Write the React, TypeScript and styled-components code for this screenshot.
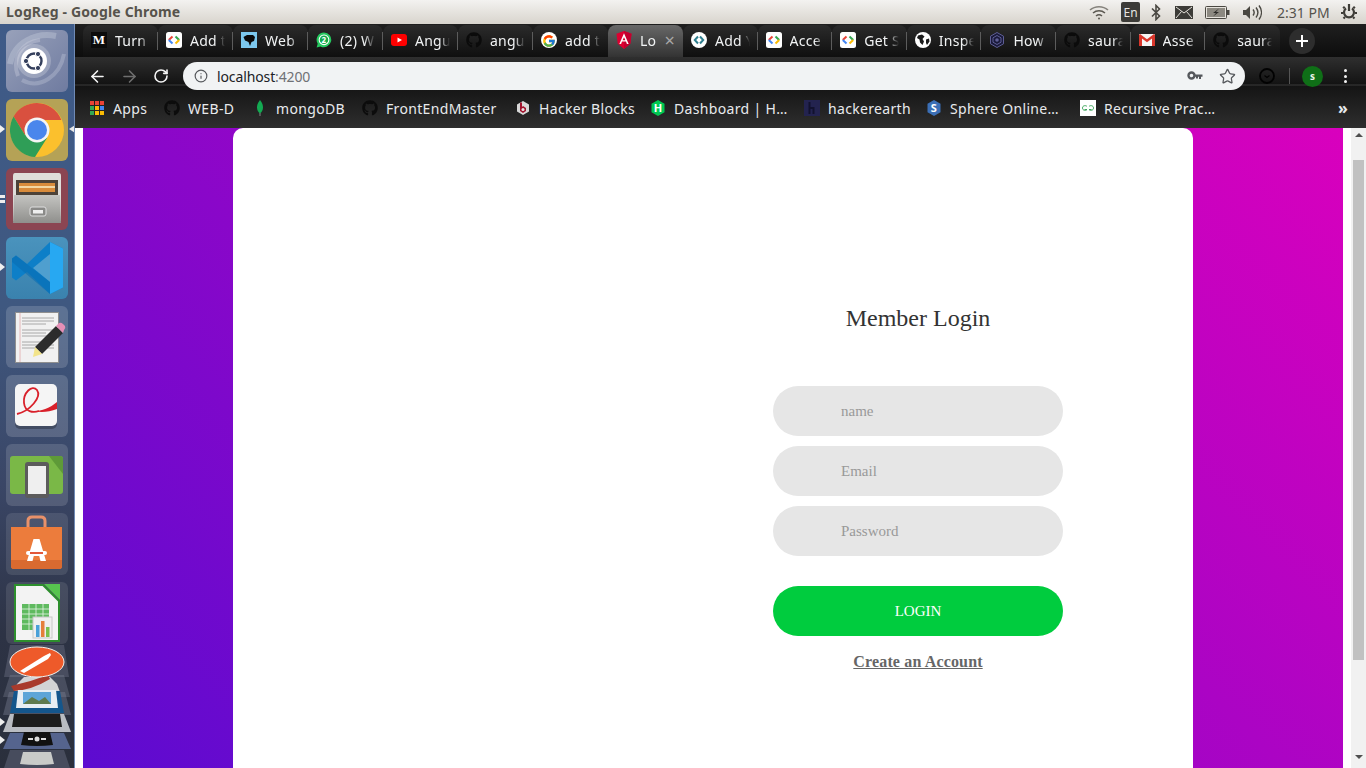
import React from "react";
import styled, { createGlobalStyle } from "styled-components";
import { ArrowLeft, ArrowRight, RotateCw, Star, Info } from "lucide-react";
import { FaGithub } from "react-icons/fa";
import { FcGoogle } from "react-icons/fc";

const Global = createGlobalStyle`
  html, body { margin: 0; padding: 0; height: 100%; overflow: hidden; background: #fff; }
  * { box-sizing: border-box; }
  input::placeholder { color: #999; opacity: 1; }
`;

const uiFont = `"Noto Sans", "Open Sans", sans-serif`;
const serif = `"Liberation Serif", "Times New Roman", serif`;

const Desktop = styled.div`
  width: 1366px;
  height: 768px;
  display: flex;
  flex-direction: column;
  overflow: hidden;
`;

const TopBar = styled.header`
  height: 24px;
  flex: none;
  display: flex;
  align-items: center;
  justify-content: space-between;
  padding: 0 7px 0 6px;
  background: linear-gradient(#f3f2f0, #d8d4cd);
  font-family: ${uiFont};
`;
const WindowTitle = styled.div`
  font-size: 14px;
  font-weight: 700;
  color: #57534c;
  letter-spacing: 0.15px;
  margin-bottom: 2px;
`;
const Tray = styled.div`
  display: flex;
  align-items: center;
  height: 24px;
`;
const TraySlot = styled.div<{ $w: number }>`
  width: ${(p) => p.$w}px;
  display: flex;
  align-items: center;
  justify-content: center;
  flex: none;
`;
const LangBadge = styled.div`
  width: 19px;
  height: 20px;
  margin-right: 3px;
  border-radius: 2px;
  background: #3c3b37;
  color: #e8e6e1;
  font-size: 12px;
  display: flex;
  align-items: center;
  justify-content: center;
`;
const Clock = styled.div`
  font-size: 14px;
  color: #55524c;
  width: 53px;
  white-space: nowrap;
  margin: 0 9px 0 8px;
`;

const Body = styled.div`
  flex: 1;
  display: flex;
  min-height: 0;
`;

const Launcher = styled.nav`
  width: 75px;
  flex: none;
  display: flex;
  flex-direction: column;
  align-items: center;
  gap: 7px;
  padding-top: 6px;
  padding-right: 1px;
  overflow: hidden;
  background: linear-gradient(#3f5b88 0, #3f5880 38%, #3a4666 62%, #2d3345 82%, #2a2f3c 100%);
  border-right: 1px solid #6f8ab5;
`;
const Tile = styled.div<{ $bg: string }>`
  position: relative;
  width: 62px;
  height: 62px;
  flex: none;
  border-radius: 6px;
  background: ${(p) => p.$bg};
  display: flex;
  align-items: center;
  justify-content: center;
`;
const PipLeft = styled.span`
  position: absolute;
  left: -6px;
  top: 26px;
  width: 0;
  height: 0;
  border-top: 4px solid transparent;
  border-bottom: 4px solid transparent;
  border-left: 5px solid #f0f0f0;
`;
const PipRight = styled.span`
  position: absolute;
  right: -7px;
  top: 26px;
  width: 0;
  height: 0;
  border-top: 4px solid transparent;
  border-bottom: 4px solid transparent;
  border-right: 6px solid #e8e8e8;
`;
const DoublePip = styled.span`
  position: absolute;
  left: -6px;
  top: 27px;
  width: 5px;
  height: 8px;
  border-top: 3px solid #eee;
  border-bottom: 3px solid #eee;
`;
const Stack = styled.svg`
  flex: none;
  margin-top: -7px;
`;

const Browser = styled.div`
  flex: 1;
  min-width: 0;
  display: flex;
  flex-direction: column;
`;
const TabStrip = styled.div`
  height: 33px;
  flex: none;
  display: flex;
  align-items: stretch;
  padding: 1px 0 0 8px;
  background: linear-gradient(#1f1f1f, #0d0d0d);
  font-family: ${uiFont};
`;
const Tab = styled.div<{ $active?: boolean; $sep?: boolean; $wide?: boolean }>`
  position: relative;
  width: ${(p) => (p.$wide ? "75px" : "74.6px")};
  flex: none;
  display: flex;
  align-items: center;
  gap: 8px;
  padding: 0 0 2px 8px;
  border-radius: 8px 8px 0 0;
  background: ${(p) =>
    p.$active ? "linear-gradient(#686868, #333333)" : "linear-gradient(#2b2b2b, #0f0f0f)"};
  color: #f1f3f4;
  font-size: 14px;
  letter-spacing: 0.25px;
  &::after {
    content: "";
    display: ${(p) => (p.$sep ? "block" : "none")};
    position: absolute;
    right: 0;
    top: 7px;
    height: 18px;
    width: 1px;
    background: #5c5c5c;
  }
`;
const TabLabel = styled.span<{ $w: number }>`
  width: ${(p) => p.$w}px;
  white-space: nowrap;
  -webkit-mask-image: linear-gradient(to right, #000 70%, transparent);
  mask-image: linear-gradient(to right, #000 70%, transparent);
`;
const TabClose = styled.span`
  position: absolute;
  right: 8px;
  top: 5px;
  font-size: 18px;
  line-height: 20px;
  color: #a8a8a8;
`;
const NewTab = styled.div`
  width: 26px;
  height: 26px;
  margin: 3px 0 0 9px;
  border-radius: 50%;
  background: #2d2d2d;
  color: #fff;
  display: flex;
  align-items: center;
  justify-content: center;
`;
const FavBox = styled.span`
  width: 16px;
  height: 16px;
  flex: none;
  display: inline-flex;
  align-items: center;
  justify-content: center;
`;
const MediumMark = styled.span`
  width: 16px;
  height: 16px;
  background: #0b0b0b;
  color: #fff;
  font: 700 13px/16px ${serif};
  text-align: center;
`;

const Toolbar = styled.div`
  height: 33px;
  flex: none;
  display: flex;
  align-items: flex-start;
  padding: 5px 0 0 6px;
  background: linear-gradient(#2f2f2f 0, #131313 27px, #3a3a3a 28px, #141414 29px, #161616 100%);
`;
const NavButton = styled.div<{ $dim?: boolean }>`
  width: 32px;
  height: 28px;
  display: flex;
  align-items: center;
  justify-content: center;
  color: ${(p) => (p.$dim ? "#6f6f6f" : "#f5f5f5")};
`;
const Omnibox = styled.div`
  width: 1062px;
  height: 28px;
  margin-left: 6px;
  flex: none;
  display: flex;
  align-items: center;
  padding: 0 2px 0 11px;
  border-radius: 14px;
  background: #f1f3f4;
  font: 14px ${uiFont};
  color: #202124;
`;
const UrlHost = styled.span`
  margin-left: 9px;
  flex: 1;
  letter-spacing: -0.12px;
`;
const UrlPort = styled.span`
  color: #6f7175;
`;
const OmniIcon = styled.span`
  width: 32px;
  display: flex;
  align-items: center;
  justify-content: center;
  color: #55585c;
`;
const ExtSlot = styled.div`
  width: 44px;
  height: 28px;
  display: flex;
  align-items: center;
  justify-content: center;
`;
const ToolDivider = styled.div`
  width: 1px;
  height: 16px;
  margin-top: 6px;
  background: #555;
`;
const ToolCell = styled.div`
  height: 28px;
  display: flex;
  align-items: center;
  justify-content: center;
  width: 47px;
`;
const Avatar = styled.div`
  width: 21px;
  height: 21px;
  border-radius: 50%;
  background: #0f6f17;
  color: #e8f5e9;
  font: 700 10px/21px ${uiFont};
  text-align: center;
  margin-right: 2px;
`;
const Dots = styled.div`
  width: 16px;
  height: 14px;
  margin-top: 7px;
  display: flex;
  flex-direction: column;
  align-items: center;
  gap: 2.5px;
  & > i {
    width: 3px;
    height: 3px;
    background: #f2f2f2;
    border-radius: 50%;
  }
`;

const Bookmarks = styled.div`
  height: 38px;
  flex: none;
  display: flex;
  align-items: center;
  padding: 0 0 2px 14px;
  background: linear-gradient(#171717, #2e2e2e);
  font: 14px ${uiFont};
  color: #e8eaed;
  letter-spacing: 0.33px;
`;
const Mark = styled.div<{ $w: number }>`
  width: ${(p) => p.$w}px;
  flex: none;
  display: flex;
  align-items: center;
  gap: 8px;
  white-space: nowrap;
`;
const MoreMarks = styled.div`
  margin-left: auto;
  width: 32px;
  padding-left: 4px;
  font-size: 16px;
  font-weight: 700;
  color: #e8eaed;
`;

const Viewport = styled.div`
  flex: 1;
  min-height: 0;
  display: flex;
  background: #fff;
`;
const Gradient = styled.main`
  width: 1260px;
  margin-left: 8px;
  flex: none;
  display: flex;
  justify-content: center;
  background: linear-gradient(45deg, rgb(92, 11, 208), rgb(217, 0, 189));
`;
const Card = styled.section`
  width: 960px;
  height: 100%;
  display: flex;
  justify-content: flex-end;
  padding-right: 130px;
  background: #fff;
  border-radius: 10px 10px 0 0;
`;
const LoginForm = styled.form`
  width: 290px;
  display: flex;
  flex-direction: column;
  align-items: center;
  padding-top: 176px;
  font-family: ${serif};
`;
const Heading = styled.h1`
  margin: 0 0 54px;
  font-size: 24px;
  line-height: 28px;
  font-weight: 400;
  color: #333;
`;
const Field = styled.input`
  width: 100%;
  height: 50px;
  margin-bottom: 10px;
  padding: 0 30px 0 68px;
  border: 0;
  outline: 0;
  border-radius: 25px;
  background: #e6e6e6;
  font: 15px ${serif};
  color: #333;
`;
const Submit = styled.button`
  width: 100%;
  height: 50px;
  margin-top: 20px;
  border: 0;
  border-radius: 25px;
  background: #00cc3e;
  color: #fff;
  font: 15px ${serif};
`;
const CreateLink = styled.a`
  margin-top: 17px;
  font-size: 16px;
  line-height: 18px;
  font-weight: 700;
  letter-spacing: 0.15px;
  color: #666;
  text-decoration: underline;
`;
const Scrollbar = styled.aside`
  width: 15px;
  margin-left: 8px;
  flex: none;
  display: flex;
  flex-direction: column;
  align-items: center;
  padding-top: 5px;
  background: #f1f1f1;
`;
const ArrowUp = styled.span`
  width: 0;
  height: 0;
  border-left: 4px solid transparent;
  border-right: 4px solid transparent;
  border-bottom: 4px solid #505050;
`;
const ArrowDown = styled.span`
  width: 0;
  height: 0;
  margin-top: 95px;
  border-left: 4px solid transparent;
  border-right: 4px solid transparent;
  border-top: 4px solid #505050;
`;
const Thumb = styled.div`
  width: 11px;
  height: 500px;
  margin-top: 23px;
  background: #c1c1c1;
`;

type FavKind = "medium" | "dev" | "web" | "wa" | "yt" | "gh" | "g" | "ng" | "circ" | "globe" | "hex" | "gmail";

const Dev = () => (
  <svg width="16" height="16" viewBox="0 0 16 16">
    <rect width="16" height="16" rx="2.5" fill="#fff" />
    <path d="M6.5 4.5 2.8 8" fill="none" stroke="#ea4335" strokeWidth="2" />
    <path d="M2.8 8l3.7 3.5" fill="none" stroke="#4285f4" strokeWidth="2" />
    <path d="M9.5 4.5 13.2 8" fill="none" stroke="#34a853" strokeWidth="2" />
    <path d="M13.2 8 9.5 11.5" fill="none" stroke="#fbbc05" strokeWidth="2" />
  </svg>
);

const AngularLogo = () => (
  <svg width="16" height="18" viewBox="0 0 16 18">
    <path d="M8 0 .5 2.7l1.2 10L8 18l6.300-5.300 1.200-10z" fill="#dd0031" />
    <path d="M8 0v18l6.300-5.300 1.200-10z" fill="#c3002f" />
    <path d="M8 2.200 3.300 13h1.800l.9-2.400h4l.9 2.400h1.800zM8 6.300l1.400 3H6.600z" fill="#fff" />
  </svg>
);

const Fav = ({ kind }: { kind: FavKind }) => {
  switch (kind) {
    case "medium":
      return <MediumMark>M</MediumMark>;
    case "dev":
      return <Dev />;
    case "web":
      return (
        <svg width="16" height="16" viewBox="0 0 16 16">
          <rect width="16" height="16" fill="#7cc8ee" />
          <path d="M2.500 5 6 3h6l2 2-1 4-2.500 1L9 14 7.500 10 4 8.500z" fill="#0a0a0a" />
        </svg>
      );
    case "wa":
      return (
        <svg width="18" height="18" viewBox="0 0 18 18">
          <path d="M9 .5a8.300 8.300 0 0 0-7.100 12.600L.7 17.400l4.400-1.200A8.300 8.300 0 1 0 9 .5z" fill="#25c95f" />
          <circle cx="9" cy="8.800" r="6" fill="#fff" />
          <circle cx="9" cy="8.800" r="4.800" fill="#12a84b" />
          <text x="9" y="12" textAnchor="middle" fontSize="9" fontWeight="700" fontFamily="Noto Sans" fill="#fff">2</text>
        </svg>
      );
    case "yt":
      return (
        <svg width="16" height="16" viewBox="0 0 16 16">
          <rect y="2" width="16" height="12" rx="3" fill="#f00" />
          <path d="M6.500 5.500 11 8l-4.500 2.500z" fill="#fff" />
        </svg>
      );
    case "gh":
      return <FaGithub size={16} color="#0b0b0b" />;
    case "g":
      return (
        <svg width="16" height="16" viewBox="0 0 16 16">
          <circle cx="8" cy="8" r="8" fill="#fff" />
          <foreignObject x="1" y="1" width="14" height="14">
            <FcGoogle size={14} />
          </foreignObject>
        </svg>
      );
    case "ng":
      return <AngularLogo />;
    case "circ":
      return (
        <svg width="16" height="16" viewBox="0 0 16 16">
          <circle cx="8" cy="8" r="8" fill="#fff" />
          <path d="M7 4.500 3.800 8 7 11.500M9 4.500 12.200 8 9 11.500" fill="none" stroke="#2f7f8f" strokeWidth="2" />
        </svg>
      );
    case "globe":
      return (
        <svg width="16" height="16" viewBox="0 0 16 16">
          <circle cx="8" cy="8" r="8" fill="#fff" />
          <path d="M3 3.500 7 2.500 9.500 4.500 7.500 7 9 9.500 7.500 13 5 10.500 4.500 7.500 2 6zM11 7.500l3-1 .5 3-2.500 3.500-1-2z" fill="#1b1b1b" />
        </svg>
      );
    case "hex":
      return (
        <svg width="16" height="16" viewBox="0 0 16 16">
          <path d="M8 .5 14.500 4.200v7.600L8 15.500 1.500 11.800V4.200z" fill="#1a1a3a" stroke="#5f5f96" />
          <path d="M8 3.500 12 5.800v4.400L8 12.500 4 10.200V5.800z" fill="none" stroke="#5f5f96" />
          <circle cx="8" cy="8" r="1.800" fill="#5f5f96" />
        </svg>
      );
    case "gmail":
      return (
        <svg width="16" height="16" viewBox="0 0 16 16">
          <rect y="2" width="16" height="12" rx="1" fill="#f5f5f5" />
          <path d="M0 3v11h3V6.500l5 3.700 5-3.700V14h3V3l-1-1-7 5.200L1 2z" fill="#d9362b" />
        </svg>
      );
  }
};

const tabs: { icon: FavKind; label: string; w: number; active?: boolean; sep?: boolean }[] = [
  { icon: "medium", label: "Turn", w: 35, sep: true },
  { icon: "dev", label: "Add t", w: 35, sep: true },
  { icon: "web", label: "Web", w: 35, sep: true },
  { icon: "wa", label: "(2) W", w: 35, sep: true },
  { icon: "yt", label: "Angu", w: 35, sep: true },
  { icon: "gh", label: "angu", w: 35, sep: true },
  { icon: "g", label: "add t", w: 35 },
  { icon: "ng", label: "Lo", w: 22, active: true },
  { icon: "circ", label: "Add Y", w: 35, sep: true },
  { icon: "dev", label: "Acce", w: 35, sep: true },
  { icon: "dev", label: "Get S", w: 35, sep: true },
  { icon: "globe", label: "Inspe", w: 35, sep: true },
  { icon: "hex", label: "How", w: 35, sep: true },
  { icon: "gh", label: "saura", w: 35, sep: true },
  { icon: "gmail", label: "Asse", w: 35, sep: true },
  { icon: "gh", label: "saura", w: 35 },
];

const AppsGrid = () => {
  const c = ["#ea4335", "#ea4335", "#ea4335", "#34a853", "#fbbc05", "#4285f4", "#34a853", "#fbbc05", "#fbbc05"];
  return (
    <svg width="14" height="14" viewBox="0 0 14 14">
      {c.map((f, i) => (
        <rect key={i} x={(i % 3) * 5} y={Math.floor(i / 3) * 5} width="4" height="4" fill={f} />
      ))}
    </svg>
  );
};

const markIcons: Record<string, React.ReactNode> = {
  apps: <AppsGrid />,
  gh: <FaGithub size={16} color="#0c0c0c" />,
  mongo: (
    <svg width="16" height="16" viewBox="0 0 16 16">
      <path d="M8 0c2.600 3 3 5.500 3 7.500 0 3-1.600 5-3 6-1.400-1-3-3-3-6C5 5.500 5.400 3 8 0z" fill="#13aa52" />
      <path d="M7.700 13h.6v3h-.6z" fill="#b8c4c2" />
    </svg>
  ),
  hb: (
    <svg width="16" height="16" viewBox="0 0 16 16">
      <path d="M8 1 14 4.500v7L8 15l-6-3.500v-7z" fill="#d8d8d8" />
      <path d="M5 2.500h2V7l1-1 3 2v3l-3 2-3-2z" fill="#a1122c" />
      <circle cx="8" cy="9.500" r="1.500" fill="#e8e8e8" />
    </svg>
  ),
  dash: (
    <svg width="16" height="16" viewBox="0 0 16 16">
      <path d="M8 0 14.500 3.700v8.600L8 16l-6.500-3.700V3.700z" fill="#00c853" />
      <text x="8" y="12" textAnchor="middle" fontSize="11" fontWeight="700" fontFamily="Noto Sans" fill="#fff">H</text>
    </svg>
  ),
  he: (
    <svg width="16" height="16" viewBox="0 0 16 16">
      <rect width="16" height="16" fill="#23234f" />
      <path d="M4.500 2h2v5h4v7h-2V9h-2v5h-2z" fill="#12122e" />
    </svg>
  ),
  sphere: (
    <svg width="16" height="16" viewBox="0 0 16 16">
      <path d="M8 0 14.500 3.700v8.600L8 16l-6.500-3.700V3.700z" fill="#3b6fb6" />
      <text x="8" y="12" textAnchor="middle" fontSize="11" fontWeight="700" fontFamily="Noto Sans" fill="#fff">S</text>
    </svg>
  ),
  gfg: (
    <svg width="16" height="16" viewBox="0 0 16 16">
      <rect width="16" height="16" fill="#fff" />
      <path d="M7 6.500C6 5.200 2.500 5.200 2.500 8S6 10.800 7 9.500H4.500M9 6.500c1-1.300 4.500-1.300 4.500 1.500S10 10.800 9 9.500h2.500" fill="none" stroke="#2f9e4f" strokeWidth=".9" />
    </svg>
  ),
};

const marks = [
  { icon: "apps", label: "Apps", w: 75 },
  { icon: "gh", label: "WEB-D", w: 88 },
  { icon: "mongo", label: "mongoDB", w: 110 },
  { icon: "gh", label: "FrontEndMaster", w: 153 },
  { icon: "hb", label: "Hacker Blocks", w: 135 },
  { icon: "dash", label: "Dashboard | H…", w: 154 },
  { icon: "he", label: "hackerearth", w: 122 },
  { icon: "sphere", label: "Sphere Online…", w: 154 },
  { icon: "gfg", label: "Recursive Prac…", w: 150 },
];

const UbuntuIcon = () => (
  <svg width="62" height="62" viewBox="0 0 62 62">
    <path d="M4 34C8 12 30 2 50 6" fill="none" stroke="#c6ccdc" strokeWidth="6" opacity=".4" />
    <path d="M12 46C6 30 14 12 34 10" fill="none" stroke="#d0d5e2" strokeWidth="4" opacity=".35" />
    <path d="M16 50C34 60 54 46 58 24" fill="none" stroke="#c6ccdc" strokeWidth="4" opacity=".35" />
    <circle cx="28" cy="31" r="17" fill="#fff" opacity=".22" />
    <circle cx="28" cy="31" r="13" fill="#fff" />
    <circle cx="28" cy="31" r="7.500" fill="none" stroke="#343f5c" strokeWidth="2.400" />
    <circle cx="20" cy="31" r="2.600" fill="#343f5c" stroke="#fff" />
    <circle cx="32" cy="24" r="2.600" fill="#343f5c" stroke="#fff" />
    <circle cx="32" cy="38" r="2.600" fill="#343f5c" stroke="#fff" />
  </svg>
);

const ChromeIcon = () => (
  <svg width="56" height="56" viewBox="0 0 56 56">
    <circle cx="28" cy="28" r="27" fill="#fbc02d" />
    <path d="M28 1a27 27 0 0 0-23.400 13.500L16 33l12-15h24.400A27 27 0 0 0 28 1z" fill="#d9503f" />
    <path d="M4.600 14.500A27 27 0 0 0 26 55l12-19-22-3z" fill="#2f9e57" />
    <circle cx="28" cy="28" r="12.500" fill="#f5f5f5" />
    <circle cx="28" cy="28" r="10" fill="#4a86ec" />
  </svg>
);

const FilesIcon = () => (
  <svg width="56" height="56" viewBox="0 0 56 56">
    <defs>
      <linearGradient id="cab" x1="0" y1="0" x2="0" y2="1">
        <stop offset="0" stopColor="#c4c4c1" />
        <stop offset="1" stopColor="#8f8f8c" />
      </linearGradient>
    </defs>
    <path d="M6 2h44q2 0 2 3v45H4V5q0-3 2-3z" fill="#dfdeda" />
    <rect x="7" y="9" width="42" height="16" fill="#4d4339" />
    <rect x="10" y="12" width="36" height="9" fill="#d98c3c" />
    <rect x="10" y="15" width="36" height="2" fill="#f3d7a3" />
    <path d="M5 24h46l1 28H4z" fill="url(#cab)" />
    <rect x="21" y="36" width="16" height="9" rx="2" fill="#8a8a88" stroke="#dedede" />
    <rect x="24" y="39" width="10" height="3.500" fill="#efefef" />
  </svg>
);

const VsIcon = () => (
  <svg width="56" height="56" viewBox="0 0 56 56">
    <path d="M41 2 54 8.500v39L41 54 18 32 7 40.500l-4-3v-19l4-3 11 8.500z" fill="#0d7fc8" />
    <path d="M41 2 54 8.500v39L41 54z" fill="#27a8f2" />
    <path d="M41 14 24 28l17 14z" fill="#4f9fcf" />
    <path d="M3 18.500 7 15.500 41 42v12L3 22z" fill="#0a6cb0" opacity=".55" />
  </svg>
);

const EditorIcon = () => (
  <svg width="62" height="62" viewBox="0 0 62 62">
    <rect x="9.500" y="6.500" width="43" height="50" fill="#f1f1f1" stroke="#8f8f8f" />
    <path d="M14 7v49" stroke="#e6b8b8" />
    {[12, 15, 18, 24, 27, 30, 36, 39, 42].map((y) => (
      <path key={y} d={`M16 ${y}h${y % 9 === 0 ? 24 : 32}`} stroke="#a8a8a8" />
    ))}
    <path d="M29 41 50 20l7 7-21 21z" fill="#2c2c2c" />
    <path d="M29 41l7 7-9 3z" fill="#f2e48a" />
    <path d="M50 20l3-3q2-1 4 1l2 2q1 2-1 4l-1 3z" fill="#e58fb6" />
  </svg>
);

const EvinceIcon = () => (
  <svg width="62" height="62" viewBox="0 0 62 62">
    <rect x="9" y="12" width="42" height="42" rx="5" fill="#2a3040" opacity=".5" />
    <rect x="9" y="9" width="42" height="42" rx="5" fill="#f5f5f5" />
    <path d="M11 39C24 36 36 22 31 15 26 9 17 18 18 28c1 9 9 10 15 8" fill="none" stroke="#d9202a" strokeWidth="1.800" />
    <path d="M28 36c8 0 16-3 23-9v7c-8 3-16 4-23 2z" fill="#d9202a" />
  </svg>
);

const TabletIcon = () => (
  <svg width="62" height="62" viewBox="0 0 62 62">
    <rect x="4" y="12" width="53" height="38" rx="3" fill="#7ab847" />
    <path d="M43 12h11q3 0 3 3v15z" fill="#5e9a38" />
    <rect x="19" y="18" width="24" height="36" rx="3" fill="#5c5c5c" />
    <rect x="22" y="22" width="18" height="28" fill="#efefef" />
  </svg>
);

const StoreIcon = () => (
  <svg width="62" height="62" viewBox="0 0 62 62">
    <path d="M22 14V8q0-4 4-4h9q4 0 4 4v6" fill="none" stroke="#e8916a" strokeWidth="3" />
    <path d="M5 14h51v39q0 3-3 3H8q-3 0-3-3z" fill="#ec7c3c" />
    <path d="M5 47h51v6q0 3-3 3H8q-3 0-3-3z" fill="#d96a30" />
    <path d="M27.500 26h6L40 48h-5.500l-1.300-5h-5.400l-1.300 5H21z" fill="#fff" />
    <rect x="20" y="38" width="21" height="4" rx="2" fill="#fff" />
    <rect x="24" y="39" width="13" height="2" fill="#e3583a" />
  </svg>
);

const CalcIcon = () => (
  <svg width="62" height="62" viewBox="0 0 62 62">
    <path d="M38 2h16v16z" fill="#57c44f" />
    <path d="M9 3h28l16 16v40H9z" fill="#f3f3f3" stroke="#2d8f2d" strokeWidth="2" />
    <rect x="16" y="22" width="27" height="26" fill="#5fba5f" />
    <path d="M16 27h27M16 32h27M16 37h27M16 42h27M23 22v26M30 22v26M37 22v26" stroke="#e8f5e8" strokeWidth=".8" />
    <rect x="27" y="35" width="19" height="21" fill="#efefef" stroke="#c8c8c8" />
    <rect x="30" y="43" width="3.500" height="12" fill="#4aa0d8" />
    <rect x="35" y="39" width="3.500" height="16" fill="#e57f3a" />
    <rect x="40" y="45" width="3.500" height="10" fill="#78c04e" />
  </svg>
);

const CollapsedStack = () => (
  <Stack width="74" height="124" viewBox="0 0 74 124">
    <path d="M10 1H64L69 33H4z" fill="#8a90a2" opacity=".3" />
    <path d="M10 31H64L70 53H3z" fill="#7d8396" opacity=".35" />
    <path d="M9 48H65L71 71H3z" fill="#7d8396" opacity=".4" />
    <path d="M10 70H64L71 88H3z" fill="#b9bcc2" />
    <path d="M14 70H60L62 83H12z" fill="#1d1d1d" />
    <path d="M10 89H64L71 105H3z" fill="#55648e" />
    <path d="M10 106H64L70 124H4z" fill="#474c5d" />
    <path d="M24 88h26l3 13q-16 2-32 0z" fill="#111" />
    <circle cx="37" cy="95" r="2.500" fill="#ddd" />
    <path d="M28 95h5M41 95h5" stroke="#ddd" strokeWidth="2" />
    <path d="M23 108h28l3 12q-17 2-34 0z" fill="#c9cbc9" />
    <path d="M24 33h26l7 7 3 8-3 8H17l-3-8 3-8z" fill="#d2d3d5" />
    <path d="M11 42 14 47Q32 46 50 35l-2-4Q30 38 11 42z" fill="#a83a2c" />
    <path d="M14 47 60 47 64 69H10z" fill="#14568c" />
    <path d="M18 46H56L58 64H16z" fill="#e8eef3" />
    <rect x="23" y="48" width="28" height="12" fill="#5da5d8" />
    <path d="M23 60l9-7 7 4 6-4 6 7z" fill="#5f7a4e" />
    <ellipse cx="37" cy="18" rx="27" ry="15" fill="#ee5a2a" stroke="#f5f1ec" strokeWidth="1" />
    <path d="M20 27 44 12l6-3 1 2-3 4-24 14z" fill="#fff" />
    <path d="M0 74l5 4-5 4zM0 92l5 4-5 4z" fill="#eee" />
  </Stack>
);

const Wifi = () => (
  <svg width="20" height="15" viewBox="0 0 20 15" fill="none" stroke="#5a5750" strokeWidth="1.500">
    <path d="M1 5c5-4.500 13-4.500 18 0" opacity=".7" />
    <path d="M4 8c3.500-3 8.500-3 12 0" />
    <path d="M7 11c1.800-1.500 4.200-1.500 6 0" />
    <circle cx="10" cy="13.500" r="1" fill="#5a5750" stroke="none" />
  </svg>
);
const Bluetooth = () => (
  <svg width="10" height="17" viewBox="0 0 10 17" fill="none" stroke="#4a4842" strokeWidth="1.600">
    <path d="M1 4.500 8.500 12 5 15.500v-14L8.500 5 1 12.500" />
  </svg>
);
const Mail = () => (
  <svg width="18" height="13" viewBox="0 0 18 13">
    <rect width="18" height="13" fill="#3c3b37" />
    <path d="M1 1 9 7l8-6M1 12l5.500-6.500M17 12l-5.500-6.500" fill="none" stroke="#e4e1db" />
  </svg>
);
const Battery = () => (
  <svg width="25" height="13" viewBox="0 0 25 13">
    <rect x=".5" y=".5" width="21" height="12" rx="1" fill="#e6e3dd" stroke="#4a4842" />
    <rect x="2" y="2" width="18" height="9" fill="#8c8981" />
    <rect x="22" y="4" width="2.500" height="5" fill="#4a4842" />
    <path d="M14 2.500 8 7h3l-3 3.500L14 6h-3z" fill="#2d2c29" />
  </svg>
);
const Volume = () => (
  <svg width="20" height="17" viewBox="0 0 20 17" fill="none" stroke="#4a4842" strokeWidth="1.400">
    <path d="M1 6h3l4-4v13l-4-4H1z" fill="#4a4842" stroke="none" />
    <path d="M11 5.500c1.400 1.800 1.400 4.200 0 6M14 3.500c2.300 3 2.300 7 0 10M17 1.500c3.200 4.200 3.200 9.800 0 14" />
  </svg>
);
const Power = () => (
  <svg width="18" height="18" viewBox="0 0 18 18" fill="none" stroke="#3f3d38" strokeWidth="2.200">
    <path d="M6 5.400a5 5 0 1 0 6 0" />
    <path d="M9 1v7M1 10h2M15 10h2M3.200 3.800l1.500 1.500M14.800 3.800l-1.500 1.500M3.500 15.500l1.500-1.500M14.500 15.500 13 14" />
  </svg>
);
const KeyIcon = () => (
  <svg width="16" height="10" viewBox="0 0 16 10">
    <circle cx="4.500" cy="4.500" r="3" fill="none" stroke="#55585c" strokeWidth="2.400" />
    <path d="M7 3.400h8.500v2.400H14V8h-2V5.800h-1V7.500H9V5.800H7z" fill="#55585c" />
  </svg>
);
const ExtIcon = () => (
  <svg width="18" height="18" viewBox="0 0 18 18" fill="none" stroke="#020202" strokeWidth="1.800">
    <circle cx="9" cy="9" r="7" />
    <path d="M6.500 8.500 9 10.500l2.500-2" strokeWidth="1.200" />
  </svg>
);

export default function App() {
  return (
    <Desktop>
      <Global />
      <TopBar>
        <WindowTitle>LogReg - Google Chrome</WindowTitle>
        <Tray>
          <TraySlot $w={42}><Wifi /></TraySlot>
          <TraySlot $w={24}><LangBadge>En</LangBadge></TraySlot>
          <TraySlot $w={24}><Bluetooth /></TraySlot>
          <TraySlot $w={31}><Mail /></TraySlot>
          <TraySlot $w={36}><Battery /></TraySlot>
          <TraySlot $w={34}><Volume /></TraySlot>
          <Clock>2:31 PM</Clock>
          <TraySlot $w={20}><Power /></TraySlot>
        </Tray>
      </TopBar>
      <Body>
        <Launcher>
          <Tile $bg="linear-gradient(135deg, #98a1ba, #6f7ba0)"><UbuntuIcon /></Tile>
          <Tile $bg="#b5a256"><PipLeft /><ChromeIcon /><PipRight /></Tile>
          <Tile $bg="#8b4552"><DoublePip /><FilesIcon /></Tile>
          <Tile $bg="linear-gradient(#4a93bd, #3a82ae)"><PipLeft /><VsIcon /></Tile>
          <Tile $bg="rgba(255,255,255,.16)"><EditorIcon /></Tile>
          <Tile $bg="rgba(255,255,255,.16)"><EvinceIcon /></Tile>
          <Tile $bg="rgba(255,255,255,.14)"><TabletIcon /></Tile>
          <Tile $bg="rgba(255,255,255,.1)"><StoreIcon /></Tile>
          <Tile $bg="rgba(255,255,255,.1)"><CalcIcon /></Tile>
          <CollapsedStack />
        </Launcher>
        <Browser>
          <TabStrip>
            {tabs.map((t, i) => (
              <Tab key={i} $active={t.active} $sep={t.sep} $wide={i < 8}>
                <FavBox><Fav kind={t.icon} /></FavBox>
                <TabLabel $w={t.w}>{t.label}</TabLabel>
                {t.active && <TabClose>×</TabClose>}
              </Tab>
            ))}
            <NewTab>
              <svg width="12" height="12" viewBox="0 0 12 12">
                <path d="M6 0v12M0 6h12" stroke="#fff" strokeWidth="2" />
              </svg>
            </NewTab>
          </TabStrip>
          <Toolbar>
            <NavButton><ArrowLeft size={19} strokeWidth={2} /></NavButton>
            <NavButton $dim><ArrowRight size={19} strokeWidth={2} /></NavButton>
            <NavButton><RotateCw size={16} strokeWidth={2.4} /></NavButton>
            <Omnibox>
              <Info size={14} color="#55585c" />
              <UrlHost>localhost<UrlPort>:4200</UrlPort></UrlHost>
              <OmniIcon><KeyIcon /></OmniIcon>
              <OmniIcon><Star size={17} strokeWidth={1.8} /></OmniIcon>
            </Omnibox>
            <ExtSlot><ExtIcon /></ExtSlot>
            <ToolDivider />
            <ToolCell><Avatar>s</Avatar></ToolCell>
            <Dots><i /><i /><i /></Dots>
          </Toolbar>
          <Bookmarks>
            {marks.map((m) => (
              <Mark key={m.label} $w={m.w}>
                <FavBox>{markIcons[m.icon]}</FavBox>
                {m.label}
              </Mark>
            ))}
            <MoreMarks>»</MoreMarks>
          </Bookmarks>
          <Viewport>
            <Gradient>
              <Card>
                <LoginForm onSubmit={(e) => e.preventDefault()}>
                  <Heading>Member Login</Heading>
                  <Field placeholder="name" />
                  <Field placeholder="Email" />
                  <Field placeholder="Password" type="password" />
                  <Submit type="button">LOGIN</Submit>
                  <CreateLink href="#">Create an Account</CreateLink>
                </LoginForm>
              </Card>
            </Gradient>
            <Scrollbar>
              <ArrowUp />
              <Thumb />
              <ArrowDown />
            </Scrollbar>
          </Viewport>
        </Browser>
      </Body>
    </Desktop>
  );
}
